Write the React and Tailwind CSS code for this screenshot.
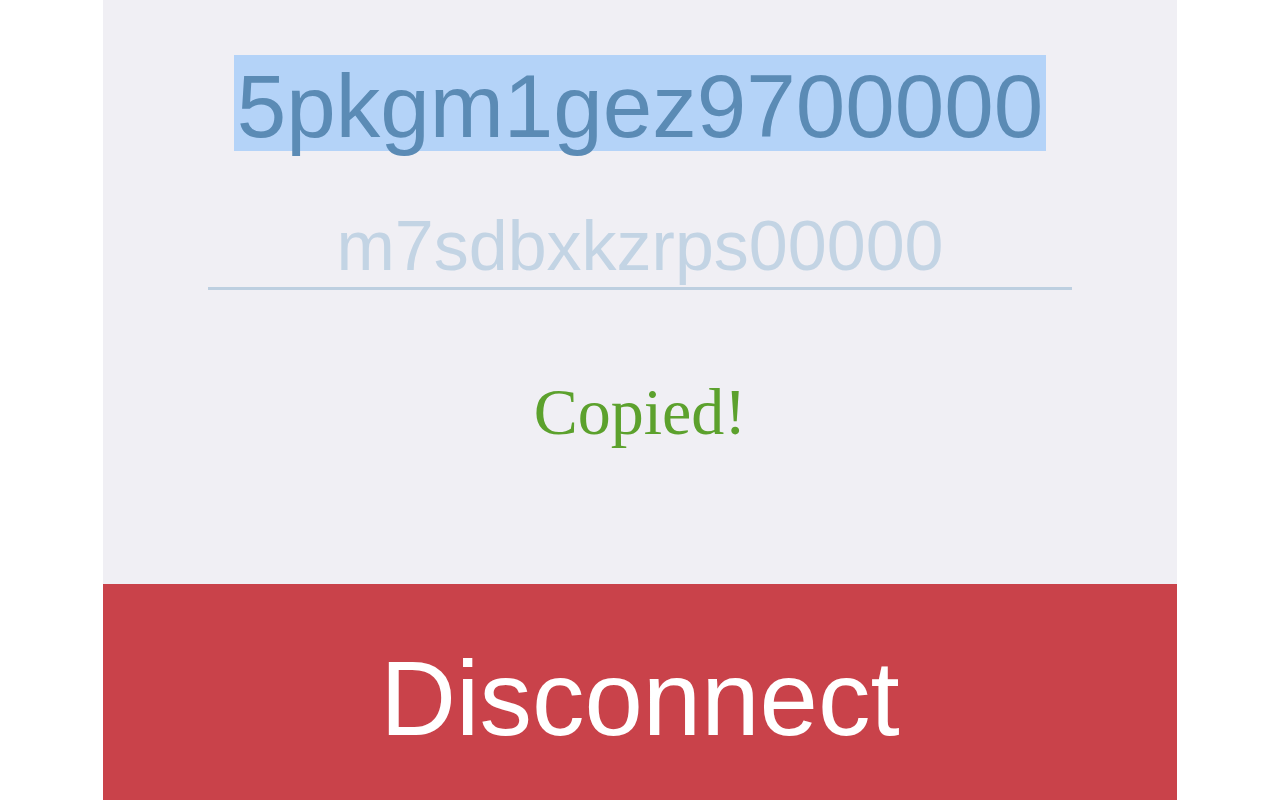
import React from 'react'

function App() {
  const address = '5pkgm1gez9700000'
  const placeholder = 'm7sdbxkzrps00000'

  return (
    <div className="min-h-[800px] w-[1280px] bg-white overflow-hidden font-['Liberation_Sans',Arial,sans-serif]">
      <div className="ml-[103px] w-[1074px] h-[800px] flex flex-col">
        {/* Account panel */}
        <div className="h-[584px] bg-[#f0eff4] flex flex-col items-center pt-[55px]">
          <span className="inline-block h-[96px] px-[3px] bg-[#b4d3f8] text-[#5b8bb5] text-[89px] leading-[102px] whitespace-nowrap">
            {address}
          </span>

          <div className="mt-[55px] w-[864px] pb-px border-b-[3px] border-[#bdcfe0] text-center text-[#c3d4e4] text-[70px] leading-[80px] whitespace-nowrap">
            {placeholder}
          </div>

          <p className="mt-[86px] text-[#5ca12d] text-[66px] leading-[72px] font-['Liberation_Serif','Times_New_Roman',serif]">
            Copied!
          </p>
        </div>

        {/* Disconnect */}
        <button className="h-[216px] w-full bg-[#c9424a] text-white text-[105px] leading-[120px] pt-[55px] flex justify-center items-start">
          Disconnect
        </button>
      </div>
    </div>
  )
}

export default App
